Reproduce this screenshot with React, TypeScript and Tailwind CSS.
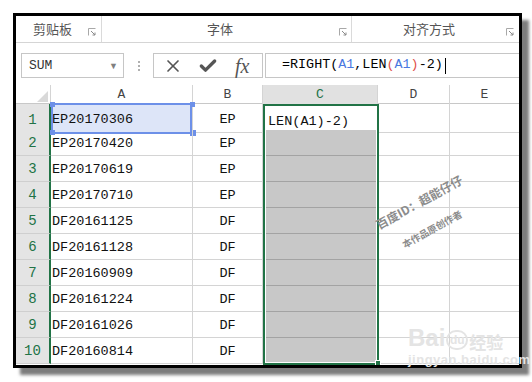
import { X, Check } from 'lucide-react'

const rows: [string, string][] = [
  ['EP20170306', 'EP'],
  ['EP20170420', 'EP'],
  ['EP20170619', 'EP'],
  ['EP20170710', 'EP'],
  ['DF20161125', 'DF'],
  ['DF20161128', 'DF'],
  ['DF20160909', 'DF'],
  ['DF20161224', 'DF'],
  ['DF20161026', 'DF'],
  ['DF20160814', 'DF'],
]

const mono = "font-['Liberation_Mono',monospace]"
const cjk = "font-['Noto_Sans_CJK_SC',sans-serif]"

function Launcher() {
  return (
    <svg width="8" height="8" viewBox="0 0 8 8" className="shrink-0">
      <path d="M0.5 7.5V0.5H7.5" fill="none" stroke="#a8a8a8" strokeWidth="1" />
      <path d="M3 3L7 7M7 4.5V7H4.5" fill="none" stroke="#8a8a8a" strokeWidth="1" />
    </svg>
  )
}

function Ribbon() {
  return (
    <div className={`flex h-[27px] shrink-0 items-stretch whitespace-nowrap border-b border-[#d5d5d5] text-[13px] text-[#555] ${cjk}`}>
      <div className="flex w-[86px] items-center border-r border-[#dadada] pl-[17px]">
        <span>剪贴板</span>
        <span className="ml-auto mr-[5px] mt-[6px]">
          <Launcher />
        </span>
      </div>
      <div className="flex w-[250px] items-center border-r border-[#dadada]">
        <span className="ml-[105px]">字体</span>
        <span className="ml-auto mr-[4px] mt-[6px]">
          <Launcher />
        </span>
      </div>
      <div className="flex flex-1 items-center">
        <span className="ml-[51px]">对齐方式</span>
        <span className="ml-auto mr-[5px] mt-[6px]">
          <Launcher />
        </span>
      </div>
    </div>
  )
}

function FormulaBar() {
  return (
    <div className="mt-[10px] flex h-[25px] shrink-0 items-stretch">
      <div className="ml-[5px] flex w-[103px] items-center border border-[#c6c6c6] pl-[7px] pr-[5px]">
        <span className={`${mono} text-[13px] text-[#333]`}>SUM</span>
        <span className="ml-auto text-[9px] text-[#808080]">▼</span>
      </div>
      <div className="flex w-[29px] flex-col items-center justify-center gap-[2px]">
        <span className="h-[2px] w-[2px] bg-[#b0b0b0]" />
        <span className="h-[2px] w-[2px] bg-[#b0b0b0]" />
        <span className="h-[2px] w-[2px] bg-[#b0b0b0]" />
      </div>
      <div className="flex w-[110px] items-center border border-[#c6c6c6] pl-[9px]">
        <X size={20} strokeWidth={2} color="#555" />
        <Check size={20} strokeWidth={4} color="#555" className="ml-[15px]" />
        <span className="ml-[17px] font-['Liberation_Serif',serif] text-[20px] italic leading-none text-[#555]">fx</span>
      </div>
      <div className={`ml-[2px] flex flex-1 items-center border-y border-l border-[#c6c6c6] pl-[16px] ${mono} text-[13.4px] text-black`}>
        <span>=RIGHT(</span>
        <span className="text-[#4a78e0]">A1</span>
        <span>,LEN</span>
        <span className="text-[#e0504a]">(</span>
        <span className="text-[#4a78e0]">A1</span>
        <span className="text-[#e0504a]">)</span>
        <span>-2)</span>
        <span className="ml-[2px] h-[16px] w-px bg-black" />
      </div>
    </div>
  )
}

const cols = 'grid grid-cols-[35px_142px_70px_115px_72px_1fr]'

function Header() {
  return (
    <div className={`${cols} mt-[7px] h-[19px] shrink-0 border-b border-[#c8c8c8] ${mono} text-[13px] text-[#444]`}>
      <div className="relative border-r border-[#d4d4d4]">
        <div className="absolute bottom-[3px] right-[2px] h-0 w-0 border-b-[11px] border-l-[11px] border-b-[#d9d9d9] border-l-transparent" />
      </div>
      <div className="flex items-center justify-center border-r border-[#d4d4d4]">A</div>
      <div className="flex items-center justify-center border-r border-[#d4d4d4]">B</div>
      <div className="flex items-center justify-center border-r border-[#d4d4d4] bg-[#e1e1e1] text-[#217346]">C</div>
      <div className="flex items-center justify-center border-r border-[#d4d4d4]">D</div>
      <div className="flex items-center justify-center">E</div>
    </div>
  )
}

function Grid() {
  return (
    <div className="relative">
      {rows.map(([a, b], i) => (
        <div key={i} className={`${cols} h-[26px] ${mono} text-[13.5px] text-[#111]`}>
          <div className="flex items-end justify-center border-b border-r-2 border-b-[#cfcfcf] border-r-[#217346] bg-[#e4e4e4] pb-[1px] text-[14px] text-[#217346]">
            {i + 1}
          </div>
          <div className={`relative flex items-center border-b border-r border-[#d4d4d4] pl-[1px] pt-[3px] ${i === 0 ? 'bg-[#dde5f8]' : ''}`}>
            {a}
            {i === 0 && (
              <>
                <div className="absolute -top-px left-0 right-0 bottom-[-2px] border-2 border-[#6d90e8]" />
                <div className="absolute -left-[1px] -top-[2px] h-[5px] w-[5px] bg-[#6d90e8]" />
                <div className="absolute -right-[3px] -top-[2px] h-[5px] w-[5px] bg-[#6d90e8]" />
                <div className="absolute -bottom-[3px] -left-[1px] h-[5px] w-[5px] bg-[#6d90e8]" />
                <div className="absolute -bottom-[4px] -right-[4px] h-[6px] w-[6px] bg-[#6d90e8]" />
              </>
            )}
          </div>
          <div className="flex items-center justify-center border-b border-r border-[#d4d4d4] pt-[3px]">{b}</div>
          <div
            className={`flex items-center border-b border-r pl-[5px] pt-[8px] ${
              i === 0 ? 'border-[#d4d4d4] bg-white' : 'border-b-[#a3a3a3] border-r-[#d4d4d4] bg-[#c8c8c8]'
            }`}
          >
            {i === 0 ? 'LEN(A1)-2)' : ''}
          </div>
          <div className="border-b border-r border-[#d4d4d4]" />
          <div className="border-b border-[#d4d4d4]" />
        </div>
      ))}
      <div className="absolute left-[247px] top-0 h-[261px] w-[116px] border-2 border-[#217346] shadow-[inset_0_0_0_1px_#ffffff]" />
      <div className="absolute left-[359px] top-[256px] h-[6px] w-[6px] border border-white bg-[#217346]" />
    </div>
  )
}

function Watermark() {
  return (
    <>
      <div className={`pointer-events-none absolute left-[403px] top-[186px] -translate-x-1/2 -translate-y-1/2 -rotate-[29deg] whitespace-nowrap text-[12px] font-bold text-[#8c8c8c] ${cjk}`}>
        百度ID：超能仔仔
      </div>
      <div className={`pointer-events-none absolute left-[416px] top-[213px] -translate-x-1/2 -translate-y-1/2 -rotate-[29deg] whitespace-nowrap text-[9.5px] font-bold text-[#8c8c8c] ${cjk}`}>
        本作品原创作者
      </div>
    </>
  )
}

function BaiduMark() {
  return (
    <div className="pointer-events-none absolute left-[408px] top-[326px] flex flex-col items-start leading-none text-[#e4e4e4]">
      <div className="flex items-end">
        <span className="font-['Liberation_Sans',sans-serif] text-[24px] font-bold">Bai</span>
        <span className="mx-[1px] flex h-[20px] w-[22px] items-center justify-center rounded-full border-2 border-[#e4e4e4] font-['Liberation_Sans',sans-serif] text-[12px] font-bold">du</span>
        <span className={`${cjk} text-[17px] font-bold`}>经验</span>
      </div>
      <span className="mt-[3px] font-['Liberation_Sans',sans-serif] text-[13px] font-bold tracking-[0.5px]">jingyan.baidu.com</span>
    </div>
  )
}

export default function App() {
  return (
    <div className="relative h-[382px] w-[532px] bg-white pl-[13px] pt-[13px]">
      <div className="relative flex h-[355px] w-[509px] flex-col overflow-hidden border-[3px] border-black bg-white shadow-[7px_7px_3px_#7d7d7d]">
        <Ribbon />
        <FormulaBar />
        <Header />
        <Grid />
        <Watermark />
      </div>
      <BaiduMark />
    </div>
  )
}
